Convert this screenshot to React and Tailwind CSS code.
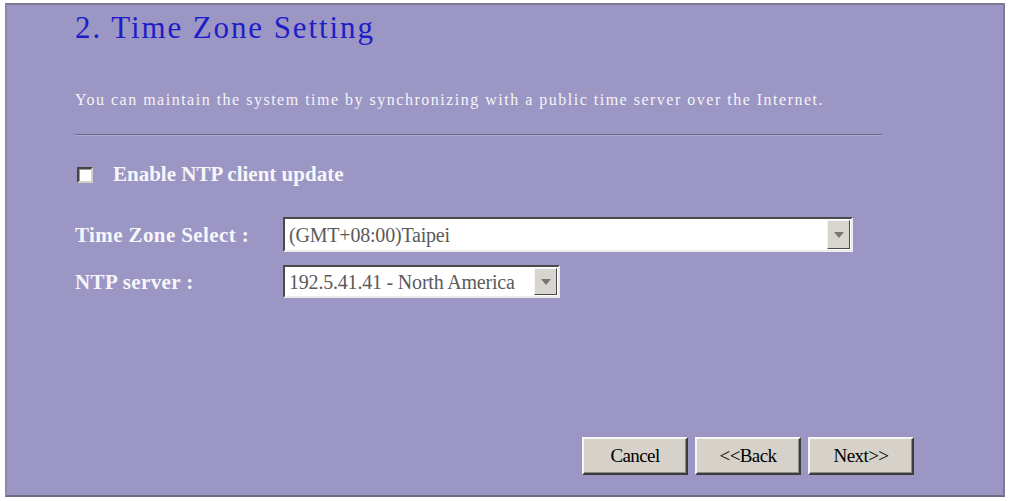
import React from 'react';

const serif = { fontFamily: '"Liberation Serif", "Times New Roman", serif' };

function Select({ value, width }) {
  return (
    <div
      className={`flex items-stretch bg-white border-2 border-t-[#4a4a4a] border-l-[#4a4a4a] border-b-[#ececec] border-r-[#ececec] ${width}`}
    >
      <span className="flex-1 flex items-center pl-[4px] text-[20px] leading-none text-[#5a5a5a] tracking-[-0.2px] whitespace-nowrap overflow-hidden">
        {value}
      </span>
      <span className="my-[1px] mr-[1px] flex items-center justify-center w-[23px] bg-[#d8d5cf] border border-t-[#f4f4f4] border-l-[#f4f4f4] border-b-[#4a4a4a] border-r-[#4a4a4a]">
        <svg width="10" height="6" viewBox="0 0 10 6">
          <path d="M0 0h10L5 6z" fill="#777" />
        </svg>
      </span>
    </div>
  );
}

function Btn({ children }) {
  return (
    <button className="w-[106px] h-[38px] bg-[#d6d2ca] text-[19px] text-black tracking-[-0.6px] border-2 border-t-[#f6f6f6] border-l-[#f6f6f6] border-b-[#3c3c3c] border-r-[#3c3c3c] shadow-[inset_-1px_-1px_0_#8a8a8a]">
      {children}
    </button>
  );
}

export default function App() {
  return (
    <div className="w-[1012px] h-[501px] bg-white pt-[3px] pl-[5px]" style={serif}>
      <div className="w-[1000px] h-[494px] bg-[#9b96c4] border-t-2 border-t-[#7b7894] border-l-2 border-l-[#8a87a8] border-r-2 border-r-[#7d7a96] border-b-2 border-b-[#6f6c86] flex flex-col">
        <div className="pl-[68px] pt-[5px]">
          <h1 className="text-[31px] leading-[36px] text-[#1e1ec8] tracking-[1.9px]">2. Time Zone Setting</h1>

          <p className="mt-[44px] text-[16px] leading-[20px] text-[#f4f4f8] tracking-[1.5px] whitespace-nowrap">
            You can maintain the system time by synchronizing with a public time server over the Internet.
          </p>

          <div className="mt-[24px] w-[807px] h-[2px] border-t border-t-[#6e6a8c] border-b border-b-[#aeaad2]" />

          <div className="mt-[28px] flex items-center h-[22px]">
            <span className="ml-[2px] w-[16px] h-[16px] bg-white border-2 border-t-[#444] border-l-[#444] border-b-[#d4d0c8] border-r-[#d4d0c8] shadow-[inset_1px_1px_0_#999]" />
            <span className="ml-[20px] text-[21px] font-bold text-[#f6f6fa]">Enable NTP client update</span>
          </div>

          <div className="mt-[31px] flex items-center">
            <span className="w-[208px] pt-[2px] text-[21px] font-bold text-[#f6f6fa] tracking-[0.4px]">Time Zone Select :</span>
            <Select value="(GMT+08:00)Taipei" width="w-[570px] h-[35px]" />
          </div>

          <div className="mt-[13px] flex items-center">
            <span className="w-[208px] pt-[2px] text-[21px] font-bold text-[#f6f6fa] tracking-[0.4px]">NTP server :</span>
            <Select value="192.5.41.41 - North America" width="w-[277px] h-[33px]" />
          </div>
        </div>

        <div className="mt-auto mb-[20px] flex justify-end gap-[7px] pr-[89px]">
          <Btn>Cancel</Btn>
          <Btn>&lt;&lt;Back</Btn>
          <Btn>Next&gt;&gt;</Btn>
        </div>
      </div>
    </div>
  );
}
